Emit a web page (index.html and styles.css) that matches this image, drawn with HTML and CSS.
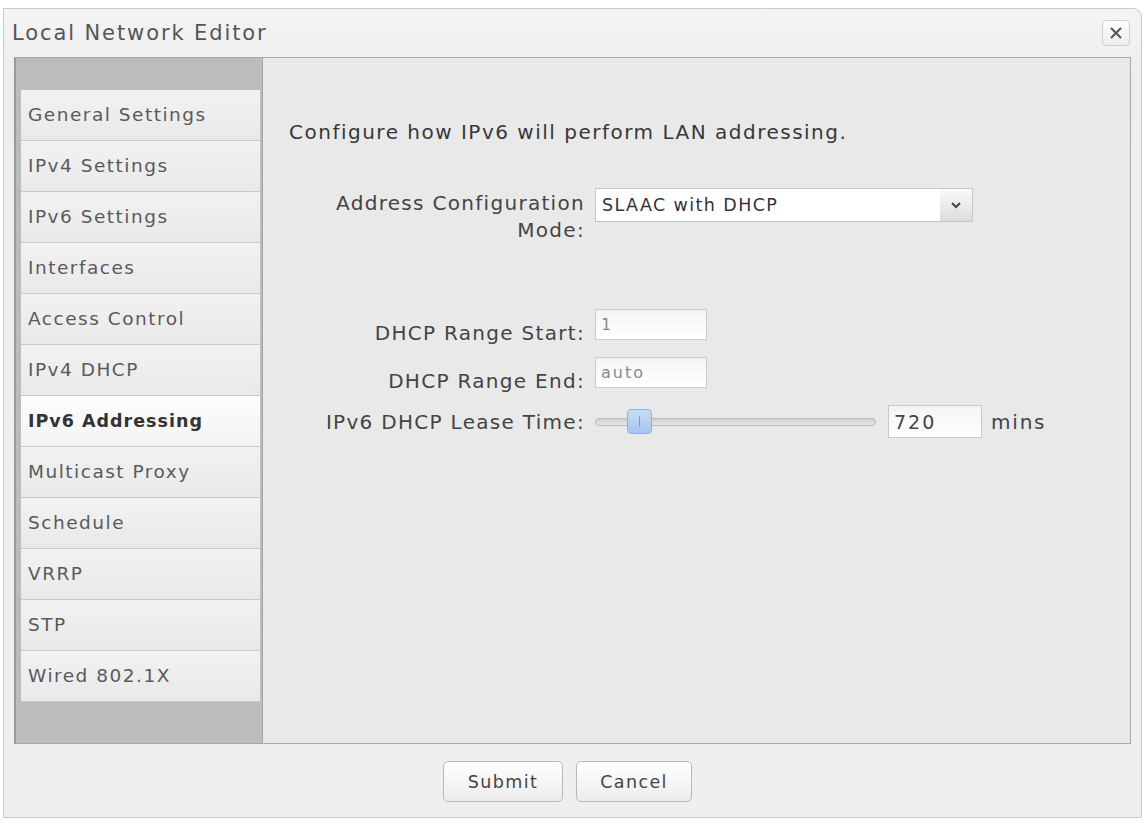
FILE: index.html
```html
<!DOCTYPE html>
<html lang="en">
<head>
    <meta charset="UTF-8">
    <title>Local Network Editor</title>
    <link rel="stylesheet" href="styles.css">
</head>
<body>
    <div class="dialog">
        <div class="titlebar">
            <span class="title">Local Network Editor</span>
            <button class="close-button" title="Close">
                <svg width="14" height="14" viewBox="0 0 14 14"><path d="M2 2 L12 12 M12 2 L2 12" stroke="#555" stroke-width="2"/></svg>
            </button>
        </div>

        <div class="panel">
            <div class="sidebar">
                <div class="tab">General Settings</div>
                <div class="tab">IPv4 Settings</div>
                <div class="tab">IPv6 Settings</div>
                <div class="tab">Interfaces</div>
                <div class="tab">Access Control</div>
                <div class="tab">IPv4 DHCP</div>
                <div class="tab active">IPv6 Addressing</div>
                <div class="tab">Multicast Proxy</div>
                <div class="tab">Schedule</div>
                <div class="tab">VRRP</div>
                <div class="tab">STP</div>
                <div class="tab">Wired 802.1X</div>
            </div>

            <div class="content">
                <p class="intro">Configure how IPv6 will perform LAN addressing.</p>

                <div class="form">
                    <label class="field-label mode-label" for="mode">Address Configuration<br>Mode:</label>
                    <div class="select-box">
                        <span id="mode">SLAAC with DHCP</span>
                        <span class="select-arrow">
                            <svg width="12" height="8" viewBox="0 0 12 8"><path d="M2 2 L6 6 L10 2" fill="none" stroke="#444" stroke-width="2"/></svg>
                        </span>
                    </div>

                    <label class="field-label range-start" for="start">DHCP Range Start:</label>
                    <input class="small-input range-start" type="text" id="start" value="1">

                    <label class="field-label" for="end">DHCP Range End:</label>
                    <input class="small-input" type="text" id="end" value="auto">

                    <label class="field-label" for="lease">IPv6 DHCP Lease Time:</label>
                    <div class="lease-row">
                        <div class="slider">
                            <div class="slider-thumb"></div>
                        </div>
                        <input class="lease-input" type="text" id="lease" value="720">
                        <span class="unit">mins</span>
                    </div>
                </div>
            </div>
        </div>

        <div class="footer">
            <button class="footer-button">Submit</button>
            <button class="footer-button">Cancel</button>
        </div>
    </div>
</body>
</html>
```

FILE: styles.css
```css
body {
    margin: 0;
    background: #fff;
    font-family: "DejaVu Sans", "Liberation Sans", sans-serif;
    color: #333;
}
.dialog {
    margin: 8px 0 0 3px;
    width: 1137px;
    height: 808px;
    border: 1px solid #c9c9c9;
    border-radius: 0 9px 0 0;
    background: linear-gradient(#f4f4f4, #eeeeee 60px, #efefef);
    display: flex;
    flex-direction: column;
}
.titlebar {
    height: 48px;
    display: flex;
    align-items: center;
    justify-content: space-between;
    padding: 0 11px 0 8px;
}
.title {
    font-size: 21px;
    color: #555;
    letter-spacing: 1.9px;
}
.close-button {
    width: 28px;
    height: 26px;
    padding: 0;
    border: 1px solid #cfcfcf;
    border-radius: 4px;
    background: linear-gradient(#fdfdfd, #ececec);
    display: flex;
    align-items: center;
    justify-content: center;
}
.panel {
    margin: 0 10px 0 10px;
    height: 685px;
    display: flex;
    border: 1px solid #a9a9a9;
    border-left: 2px solid #999;
}
.sidebar {
    width: 239px;
    background: #bcbcbc;
    padding: 32px 2px 0 5px;
    border-right: 1px solid #a5a5a5;
}
.tab {
    height: 50px;
    border-bottom: 1px solid #c9c9c9;
    background: linear-gradient(#f2f2f2, #e9e9e9);
    padding-left: 7px;
    line-height: 50px;
    font-size: 18.5px;
    letter-spacing: 1.5px;
    color: #5a5a5a;
    white-space: nowrap;
}
.tab.active {
    background: linear-gradient(#fdfdfd, #f3f3f3);
    color: #333;
    font-weight: bold;
    font-size: 17.5px;
    letter-spacing: 1px;
}
.content {
    flex: 1;
    background: #e9e9e9;
    padding-left: 26px;
}
.intro {
    margin: 62px 0 0 0;
    font-size: 20px;
    letter-spacing: 1.5px;
    color: #383838;
}
.form {
    margin-top: 44px;
    display: grid;
    grid-template-columns: 296px auto;
    column-gap: 10px;
    align-items: center;
    font-size: 20px;
    letter-spacing: 1.3px;
}
.field-label {
    text-align: right;
    color: #444;
    white-space: nowrap;
}
.mode-label {
    align-self: start;
    line-height: 27px;
    margin-top: 2px;
}
.select-box {
    align-self: start;
    width: 378px;
    height: 34px;
    border: 1px solid #c6c6c6;
    background: #fff;
    display: flex;
    align-items: center;
    justify-content: space-between;
    font-size: 17.5px;
    letter-spacing: 1.4px;
    color: #333;
    padding-left: 6px;
    box-sizing: border-box;
}
.select-arrow {
    width: 32px;
    height: 32px;
    display: flex;
    align-items: center;
    justify-content: center;
    background: linear-gradient(#fafafa, #dcdcdc);
}
.range-start {
    margin-top: 65px;
}
.small-input {
    width: 112px;
    height: 31px;
    box-sizing: border-box;
    border: 1px solid #cacaca;
    background: linear-gradient(#f4f4f4, #fff);
    font-family: "DejaVu Sans", sans-serif;
    font-size: 16px;
    letter-spacing: 2px;
    color: #888;
    padding: 0 5px;
    margin-bottom: 17px;
}
.lease-row {
    display: flex;
    align-items: center;
}
.slider {
    position: relative;
    width: 279px;
    height: 6px;
    border: 1px solid #b9b9b9;
    border-radius: 4px;
    background: linear-gradient(#d0d0d0, #e8e8e8);
}
.slider-thumb {
    position: absolute;
    left: 31px;
    top: -10px;
    width: 23px;
    height: 23px;
    border: 1px solid #8fb2e0;
    border-radius: 4px;
    background: linear-gradient(#c9dcf6, #a7c5ee);
}
.slider-thumb::after {
    content: "";
    position: absolute;
    left: 11px;
    top: 6px;
    width: 1px;
    height: 11px;
    background: #7b9dcc;
}
.lease-input {
    margin-left: 12px;
    width: 94px;
    height: 33px;
    box-sizing: border-box;
    border: 1px solid #cacaca;
    background: linear-gradient(#f4f4f4, #fff);
    font-family: "DejaVu Sans", sans-serif;
    font-size: 19px;
    letter-spacing: 2px;
    color: #444;
    padding: 0 5px;
}
.unit {
    margin-left: 9px;
    font-size: 20px;
    letter-spacing: 1.8px;
    color: #444;
}
.footer {
    flex: 1;
    display: flex;
    align-items: center;
    justify-content: center;
    gap: 13px;
    padding: 2px 10px 0 0;
}
.footer-button {
    width: 120px;
    height: 41px;
    border: 1px solid #b9b9b9;
    border-radius: 5px;
    background: linear-gradient(#ffffff, #ececec);
    font-family: "DejaVu Sans", sans-serif;
    font-size: 17.5px;
    letter-spacing: 1.4px;
    color: #444;
}
.footer-button + .footer-button {
    width: 116px;
}
```
